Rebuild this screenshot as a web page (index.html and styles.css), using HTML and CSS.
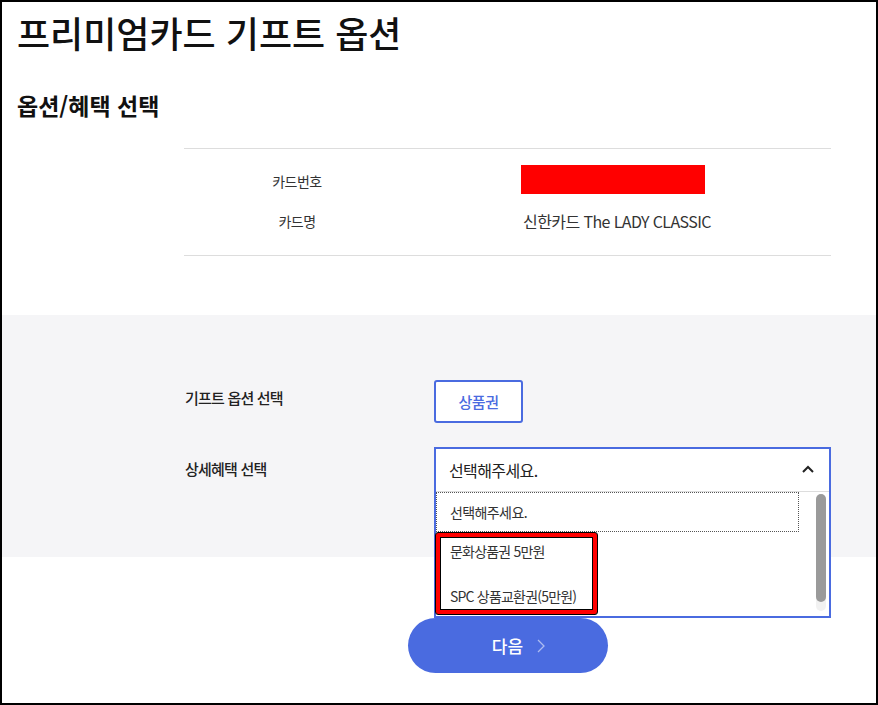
FILE: index.html
```html
<!DOCTYPE html>
<html lang="ko">
<head>
<meta charset="utf-8">
<title>프리미엄카드 기프트 옵션</title>
<link rel="stylesheet" href="styles.css">
</head>
<body>
<div class="frame">
  <h1 class="title">프리미엄카드 기프트 옵션</h1>
  <h2 class="subtitle">옵션/혜택 선택</h2>

  <div class="card-info">
    <div class="info-row">
      <div class="info-label">카드번호</div>
      <div class="info-value"><span class="redact"></span></div>
    </div>
    <div class="info-row">
      <div class="info-label">카드명</div>
      <div class="info-value info-text">신한카드 The LADY CLASSIC</div>
    </div>
  </div>

  <section class="options">
    <div class="opt-row">
      <div class="opt-label opt-label-1">기프트 옵션 선택</div>
      <button class="chip">상품권</button>
    </div>
    <div class="opt-row">
      <div class="opt-label opt-label-2">상세혜택 선택</div>
      <div class="select-holder">
        <div class="select-open">
          <div class="select-head">
            <span>선택해주세요.</span>
            <svg class="chev-up" width="12" height="8" viewBox="0 0 12 8"><polyline points="1,7 6,2 11,7" fill="none" stroke="#222" stroke-width="2"/></svg>
          </div>
          <div class="select-list">
            <div class="list-items">
              <div class="item item-focus">선택해주세요.</div>
              <div class="mark">
                <div class="mark-item">문화상품권 5만원</div>
                <div class="mark-item mark-item-2">SPC 상품교환권(5만원)</div>
              </div>
            </div>
            <div class="scroll-track"><div class="scroll-thumb"></div></div>
          </div>
        </div>
      </div>
    </div>
  </section>

  <div class="actions">
    <button class="next">다음<svg class="next-chev" width="8" height="14" viewBox="0 0 8 14"><polyline points="1,1 7,7 1,13" fill="none" stroke="rgba(255,255,255,0.55)" stroke-width="1.3"/></svg></button>
  </div>
</div>
</body>
</html>
```

FILE: styles.css
```css
* { box-sizing: border-box; }
html, body { margin: 0; padding: 0; background: #fff; }
body {
  font-family: "Noto Sans CJK KR", "Noto Sans", sans-serif;
  color: #222;
}
.frame {
  width: 878px;
  height: 705px;
  border: 2px solid #000;
  overflow: hidden;
}
.title {
  margin: 9px 0 0 15px;
  font-size: 36px;
  line-height: 42px;
  font-weight: 500;
  letter-spacing: 0;
  color: #111;
}
.subtitle {
  margin: 37px 0 0 15px;
  font-size: 23px;
  line-height: 30px;
  font-weight: 700;
  letter-spacing: 0;
  color: #111;
}
.card-info {
  margin: 28px 0 0 182px;
  width: 647px;
  border-top: 1px solid #ddd;
  border-bottom: 1px solid #ddd;
  padding: 12px 0 14px;
}
.info-row {
  display: grid;
  grid-template-columns: 230px 398px;
  height: 40px;
  align-items: center;
}
.info-label {
  text-align: center;
  font-size: 14px;
  letter-spacing: -0.5px;
  color: #333;
  padding-right: 4px;
}
.info-value {
  text-align: center;
  font-size: 16px;
  letter-spacing: -0.6px;
  color: #333;
}
.info-text { padding-left: 8px; }
.redact {
  display: inline-block;
  vertical-align: middle;
  width: 184px;
  height: 29px;
  background: #ff0000;
  margin-top: -6px;
}
.options {
  margin-top: 59px;
  background: #f5f5f7;
  padding: 65px 0 67px 183px;
}
.opt-row {
  display: flex;
  align-items: flex-start;
}
.opt-row + .opt-row { margin-top: 24px; }
.opt-label {
  width: 249px;
  font-size: 15px;
  line-height: 22px;
  font-weight: 500;
  letter-spacing: -0.8px;
  color: #222;
}
.opt-label-1 { padding-top: 7px; }
.opt-label-2 { padding-top: 11px; }
.chip {
  width: 89px;
  height: 43px;
  border: 2px solid #4a6be0;
  border-radius: 3px;
  background: #fff;
  color: #4a6be0;
  font-family: inherit;
  font-size: 15px;
  font-weight: 500;
  letter-spacing: -0.5px;
  padding: 0;
}
.select-holder {
  position: relative;
  width: 397px;
  height: 43px;
}
.select-open {
  position: absolute;
  top: 0;
  left: 0;
  width: 397px;
  height: 171px;
  border: 2px solid #4a6be0;
  background: #fff;
  z-index: 2;
}
.select-head {
  height: 43px;
  border-bottom: 1px solid #ddd;
  display: flex;
  align-items: center;
  justify-content: space-between;
  padding: 0 15px 0 13px;
  font-size: 16px;
  letter-spacing: -0.6px;
  color: #222;
}
.chev-up { margin-top: -2px; }
.select-list {
  display: flex;
  height: 123px;
}
.list-items { width: 363px; }
.item {
  height: 40px;
  display: flex;
  align-items: center;
  padding-left: 13px;
  font-size: 14px;
  letter-spacing: -0.6px;
  color: #333;
}
.item-focus { border: 1px dotted #555; }
.mark {
  margin-left: -1px;
  width: 163px;
  height: 83px;
  border: 1.5px solid #000;
  border-radius: 3px;
  box-shadow: inset 0 0 0 4px #ff0000, inset 0 0 0 5px #000;
  background: #fff;
  padding: 8px 0 0 14px;
}
.mark-item {
  font-size: 14px;
  line-height: 20px;
  letter-spacing: -0.8px;
  color: #333;
}
.mark-item-2 { margin-top: 25px; }
.scroll-track {
  margin: 2px 3px 4px auto;
  width: 10px;
  border-radius: 5px;
  background: #f1f1f1;
}
.scroll-thumb {
  width: 10px;
  height: 108px;
  border-radius: 5px;
  background: #9a9a9a;
}
.actions {
  margin: 61px 0 0 182px;
  width: 647px;
  display: flex;
  justify-content: center;
}
.next {
  width: 200px;
  height: 55px;
  border: 0;
  border-radius: 28px;
  background: #4a6be0;
  color: #fff;
  font-family: inherit;
  font-size: 17px;
  font-weight: 500;
  display: flex;
  align-items: center;
  justify-content: center;
  gap: 14px;
  padding: 0 0 0 22px;
}
```
